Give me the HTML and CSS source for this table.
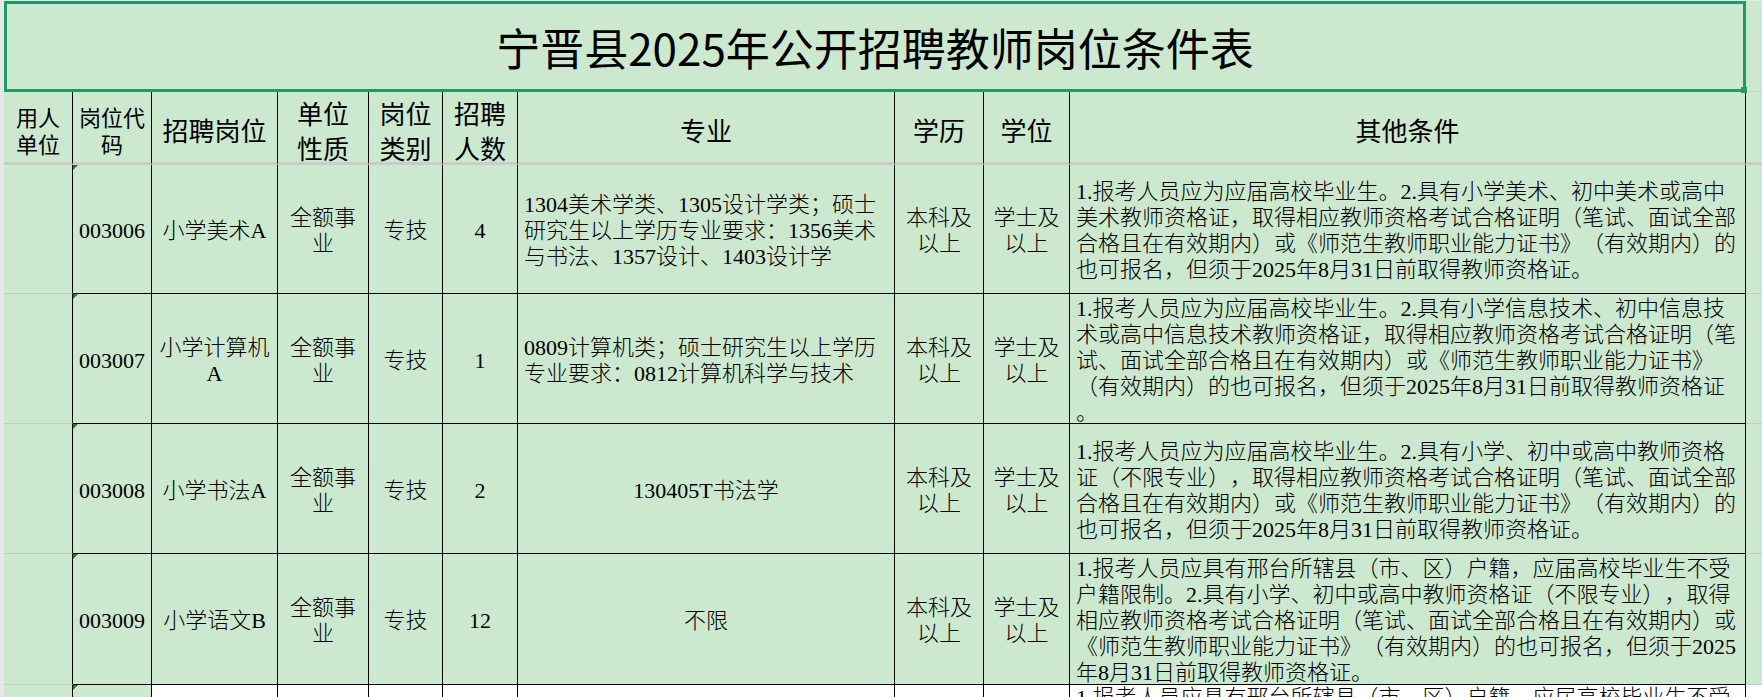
FILE: index.html
```html
<!DOCTYPE html>
<html lang="zh-CN">
<head>
<meta charset="utf-8">
<title>宁晋县2025年公开招聘教师岗位条件表</title>
<link rel="stylesheet" href="styles.css">
</head>
<body>
<div class="sheet">
  <div class="title">宁晋县2025年公开招聘教师岗位条件表</div>
  <div class="fill fill-title"></div>

  <div class="c hd sm">用人<br>单位</div>
  <div class="c hd sm">岗位代<br>码</div>
  <div class="c hd">招聘岗位</div>
  <div class="c hd two">单位<br>性质</div>
  <div class="c hd two">岗位<br>类别</div>
  <div class="c hd two">招聘<br>人数</div>
  <div class="c hd">专业</div>
  <div class="c hd">学历</div>
  <div class="c hd">学位</div>
  <div class="c hd">其他条件</div>
  <div class="fill fill-hd"></div>

  <div class="unit"></div>
  <div class="c bd code">003006</div>
  <div class="c bd">小学美术A</div>
  <div class="c bd">全额事<br>业</div>
  <div class="c bd">专技</div>
  <div class="c bd">4</div>
  <div class="c bd left">1304美术学类、1305设计学类；硕士<br>研究生以上学历专业要求：1356美术<br>与书法、1357设计、1403设计学</div>
  <div class="c bd">本科及<br>以上</div>
  <div class="c bd">学士及<br>以上</div>
  <div class="c bd left">1.报考人员应为应届高校毕业生。2.具有小学美术、初中美术或高中<br>美术教师资格证，取得相应教师资格考试合格证明（笔试、面试全部<br>合格且在有效期内）或《师范生教师职业能力证书》（有效期内）的<br>也可报名，但须于2025年8月31日前取得教师资格证。</div>
  <div class="fill"></div>

  <div class="unit"></div>
  <div class="c bd code">003007</div>
  <div class="c bd">小学计算机<br>A</div>
  <div class="c bd">全额事<br>业</div>
  <div class="c bd">专技</div>
  <div class="c bd">1</div>
  <div class="c bd left">0809计算机类；硕士研究生以上学历<br>专业要求：0812计算机科学与技术</div>
  <div class="c bd">本科及<br>以上</div>
  <div class="c bd">学士及<br>以上</div>
  <div class="c bd left">1.报考人员应为应届高校毕业生。2.具有小学信息技术、初中信息技<br>术或高中信息技术教师资格证，取得相应教师资格考试合格证明（笔<br>试、面试全部合格且在有效期内）或《师范生教师职业能力证书》<br>（有效期内）的也可报名，但须于2025年8月31日前取得教师资格证<br>。</div>
  <div class="fill"></div>

  <div class="unit"></div>
  <div class="c bd code">003008</div>
  <div class="c bd">小学书法A</div>
  <div class="c bd">全额事<br>业</div>
  <div class="c bd">专技</div>
  <div class="c bd">2</div>
  <div class="c bd">130405T书法学</div>
  <div class="c bd">本科及<br>以上</div>
  <div class="c bd">学士及<br>以上</div>
  <div class="c bd left">1.报考人员应为应届高校毕业生。2.具有小学、初中或高中教师资格<br>证（不限专业），取得相应教师资格考试合格证明（笔试、面试全部<br>合格且在有效期内）或《师范生教师职业能力证书》（有效期内）的<br>也可报名，但须于2025年8月31日前取得教师资格证。</div>
  <div class="fill"></div>

  <div class="unit"></div>
  <div class="c bd code">003009</div>
  <div class="c bd">小学语文B</div>
  <div class="c bd">全额事<br>业</div>
  <div class="c bd">专技</div>
  <div class="c bd">12</div>
  <div class="c bd">不限</div>
  <div class="c bd">本科及<br>以上</div>
  <div class="c bd">学士及<br>以上</div>
  <div class="c bd left">1.报考人员应具有邢台所辖县（市、区）户籍，应届高校毕业生不受<br>户籍限制。2.具有小学、初中或高中教师资格证（不限专业），取得<br>相应教师资格考试合格证明（笔试、面试全部合格且在有效期内）或<br>《师范生教师职业能力证书》（有效期内）的也可报名，但须于2025<br>年8月31日前取得教师资格证。</div>
  <div class="fill"></div>

  <div class="unit"></div>
  <div class="c bd code"></div>
  <div class="c bd blank"></div>
  <div class="c bd blank"></div>
  <div class="c bd blank"></div>
  <div class="c bd blank"></div>
  <div class="c bd blank"></div>
  <div class="c bd blank"></div>
  <div class="c bd blank"></div>
  <div class="c bd blank left top">1.报考人员应具有邢台所辖县（市、区）户籍，应届高校毕业生不受<br>户籍限制。2.具有小学、初中或高中教师资格证（不限专业），取得<br>相应教师资格考试合格证明（笔试、面试全部合格且在有效期内）或<br>《师范生教师职业能力证书》（有效期内）的也可报名，但须于2025<br>年8月31日前取得教师资格证。</div>
  <div class="fill blank"></div>
</div>
</body>
</html>
```

FILE: styles.css
```css
* { box-sizing: border-box; }

html, body {
  margin: 0;
  padding: 0;
}

body {
  width: 1762px;
  height: 697px;
  overflow: hidden;
  background: #e6e8e6;
}

.sheet {
  display: grid;
  margin: 1px 0 0 4px;
  grid-template-columns: 69px 79px 126px 91px 74px 75px 377px 89px 86px 676px 1fr;
  grid-template-rows: 91px 73px 129px 130px 130px 131px 130px;
  background: #cce8cf;
  text-spacing-trim: space-all;
}

.title {
  grid-column: 1 / 11;
  position: relative;
  border: 3px solid #1f9a6b;
  display: flex;
  align-items: center;
  justify-content: center;
  font-family: "Noto Sans CJK SC", sans-serif;
  font-size: 44px;
  color: #000;
  background: #cce8cf;
}

.title::after {
  content: "";
  position: absolute;
  right: -4px;
  bottom: -4px;
  width: 6px;
  height: 6px;
  background: #1f9a6b;
}

.fill {
  border-bottom: 1px solid rgba(0, 0, 0, 0.09);
  background: #cce8cf;
}

.fill-title {
  border-bottom: 1px solid #cfcfcf;
}

.fill-hd {
  border-bottom: 3px solid #cbcbcb;
}

.c {
  display: flex;
  align-items: center;
  justify-content: center;
  text-align: center;
  border-right: 1px solid #000;
  border-bottom: 1px solid #000;
  background: #cce8cf;
  color: #000;
  white-space: nowrap;
  overflow: hidden;
}

.hd {
  font-family: "Noto Sans CJK SC", sans-serif;
  font-size: 26px;
  line-height: 32px;
  padding-top: 5px;
  border-bottom: 3px solid #cbcbcb;
}

.hd.sm {
  font-size: 22px;
  line-height: 27px;
}

.hd.two {
  line-height: 35px;
}

.bd {
  font-family: "Liberation Serif", "Noto Sans CJK SC", sans-serif;
  font-size: 22px;
  font-weight: 300;
  line-height: 26px;
  padding-top: 4px;
}

.left {
  justify-content: flex-start;
  text-align: left;
  padding-left: 6px;
}

.top {
  align-items: flex-start;
  padding-top: 0;
}

.code {
  position: relative;
}

.code::before {
  content: "";
  position: absolute;
  top: 0;
  left: 0;
  border-top: 5px solid #1d7d22;
  border-right: 5px solid transparent;
}

.unit {
  border-right: 1px solid #000;
  border-bottom: 1px solid rgba(0, 0, 0, 0.09);
  background: #cce8cf;
}

.blank {
  background: #ffffff;
}
```
